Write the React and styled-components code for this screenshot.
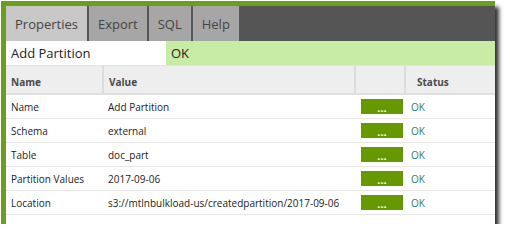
import React from "react";
import styled, { createGlobalStyle } from "styled-components";

const GlobalStyle = createGlobalStyle`
  body {
    margin: 0;
    background: #fff;
    font-family: "Open Sans", "DejaVu Sans", sans-serif;
  }
`;

const Frame = styled.div`
  margin: 1px 0 0 1px;
  width: 489px;
  background: #fff;
  border-top: 5px solid #6b9e1c;
  border-left: 5px solid #6b9e1c;
  box-shadow: 4px 6px 4px rgba(30, 30, 30, 0.9);
  padding-bottom: 9px;
`;

const TabBar = styled.div`
  display: flex;
  height: 35px;
  background: #555555;
`;

const Tab = styled.div`
  display: flex;
  align-items: center;
  padding: 0 9px;
  font-size: 13px;
  color: #444;
  background: ${(p) => (p.active ? "#c8c8c8" : "#a6a6a6")};
  border-right: 2px solid #555;
`;

const TitleRow = styled.div`
  display: grid;
  grid-template-columns: 160px 1fr;
  height: 25px;
  font-size: 13px;
  color: #222;
`;

const TitleCell = styled.div`
  display: flex;
  align-items: center;
  padding-left: 5px;
  background: ${(p) => (p.ok ? "#c8eca6" : "#fff")};
  border-bottom: 1px solid #e2e2e2;
`;

const Table = styled.table`
  width: 100%;
  table-layout: fixed;
  border-collapse: collapse;
  font-size: 10px;
  color: #222;
`;

const Th = styled.th`
  box-sizing: border-box;
  height: 28px;
  padding: 4px 5px 0;
  text-align: left;
  font-weight: bold;
  color: #4a4a4a;
  background: #eeeeee;
  border-right: 2px solid #dcdcdc;
  border-bottom: 2px solid #e0e0e0;
  width: ${(p) => p.w || "auto"};
  &:last-child {
    border-right: none;
    padding-left: 11px;
  }
`;

const Td = styled.td`
  height: 23px;
  padding: 0 5px;
  white-space: nowrap;
  border-bottom: 1px solid #e6e6e6;
  &:nth-child(3) {
    padding-left: 6px;
  }
  &:last-child {
    padding-left: 6px;
  }
`;

const Button = styled.div`
  width: 42px;
  height: 15px;
  background: #669900;
  color: #fff;
  font-size: 11px;
  font-weight: bold;
  line-height: 18px;
  text-align: center;
`;

const Status = styled.span`
  color: #2f7d63;
`;

const rows = [
  ["Name", "Add Partition"],
  ["Schema", "external"],
  ["Table", "doc_part"],
  ["Partition Values", "2017-09-06"],
  ["Location", "s3://mtlnbulkload-us/createdpartition/2017-09-06"],
];

export default function App() {
  return (
    <>
      <GlobalStyle />
      <Frame>
        <TabBar>
          <Tab active>Properties</Tab>
          <Tab>Export</Tab>
          <Tab>SQL</Tab>
          <Tab>Help</Tab>
        </TabBar>
        <TitleRow>
          <TitleCell>Add Partition</TitleCell>
          <TitleCell ok>OK</TitleCell>
        </TitleRow>
        <Table>
          <thead>
            <tr>
              <Th w="97px">Name</Th>
              <Th w="252px">Value</Th>
              <Th w="50px"></Th>
              <Th>Status</Th>
            </tr>
          </thead>
          <tbody>
            {rows.map(([k, v]) => (
              <tr key={k}>
                <Td>{k}</Td>
                <Td>{v}</Td>
                <Td>
                  <Button>...</Button>
                </Td>
                <Td>
                  <Status>OK</Status>
                </Td>
              </tr>
            ))}
          </tbody>
        </Table>
      </Frame>
    </>
  );
}
